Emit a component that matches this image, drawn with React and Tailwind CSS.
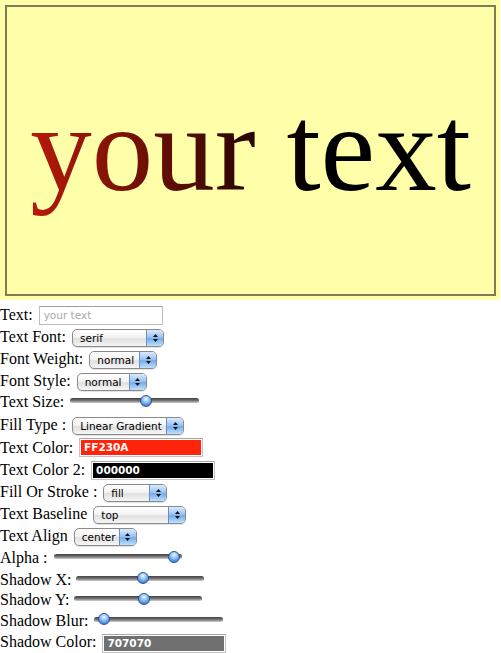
import React from "react";

const sans = "font-['DejaVu_Sans',sans-serif]";

function Arrows() {
  return (
    <span className="flex w-[17px] flex-col items-center justify-center gap-[2px] border-l border-[#6a8fc6] bg-[linear-gradient(#dbeafd,#9cc5f3_45%,#74abeb_55%,#c2e0fd)]">
      <svg width="5" height="3" viewBox="0 0 5 3">
        <polygon points="2.5,0 5,3 0,3" fill="#111" />
      </svg>
      <svg width="5" height="3" viewBox="0 0 5 3">
        <polygon points="0,0 5,0 2.5,3" fill="#111" />
      </svg>
    </span>
  );
}

function Select({ w, children }) {
  return (
    <div
      className={`ml-[2px] mt-[2px] flex h-[18px] ${w} items-stretch overflow-hidden rounded-[5px] border border-[#8a8a8a] bg-[linear-gradient(#ffffff,#f4f4f4_45%,#e0e0e0_55%,#f6f6f6)] shadow-[0_1px_1px_rgba(0,0,0,0.12)]`}
    >
      <span className={`flex-1 pl-[7px] text-[10.5px] leading-[16px] text-black ${sans}`}>{children}</span>
      <Arrows />
    </div>
  );
}

function Slider({ w, thumb, extra }) {
  return (
    <div className={`relative mb-[3px] flex h-[14px] ${w} ${extra} items-center`}>
      <div className="h-[5px] w-full rounded-full bg-[linear-gradient(#3f3f3f,#7a7a7a_55%,#cfcfcf)]" />
      <div
        className={`absolute top-[1px] ${thumb} h-[12px] w-[12px] rounded-full border border-[#2d5597] bg-[radial-gradient(circle_at_50%_30%,#eef6ff_0%,#8fc0f2_40%,#3a7fdc_80%,#2c62b8_100%)]`}
      />
    </div>
  );
}

function ColorInput({ bg, w, text }) {
  return (
    <div
      className={`ml-[2px] flex h-[19px] ${w} items-center border border-[#c2c2c2] border-t-[#a8a8a8] bg-white p-[1px]`}
    >
      <div className={`flex h-full w-full items-center pl-[3px] ${bg}`}>
        <span className={`text-[10.5px] font-bold leading-none text-white ${sans}`}>{text}</span>
      </div>
    </div>
  );
}

function Row({ h, label, children }) {
  return (
    <div className={`flex ${h} items-center`}>
      <span className="whitespace-pre">{label}</span>
      {children}
    </div>
  );
}

export default function App() {
  return (
    <div className="w-[501px] bg-white font-['Liberation_Serif','Times_New_Roman',serif] text-[16px] text-black">
      <div className="h-[300px] w-[500px] bg-[#ffffaa] pl-[5px] pt-[5px]">
        <div className="h-[291px] w-[491px] border-2 border-[#7d7d58]">
          <div className="pt-[80px] text-center text-[123px] leading-[123px]">
            <span className="bg-[linear-gradient(to_right,#b81a0a_0px,#000000_285px)] bg-clip-text text-transparent">
              your text
            </span>
          </div>
        </div>
      </div>

      <div className="pt-[4px]">
        <Row h="h-[22px]" label="Text: ">
          <div className="ml-[2px] flex h-[19px] w-[124px] items-center border border-[#bdbdbd] border-t-[#9e9e9e] bg-white pl-[4px]">
            <span className={`text-[10.5px] leading-none text-[#a9a9a9] ${sans}`}>your text</span>
          </div>
        </Row>
        <Row h="h-[22px]" label="Text Font: ">
          <Select w="w-[92px]">serif</Select>
        </Row>
        <Row h="h-[22px]" label="Font Weight: ">
          <Select w="w-[68px]">normal</Select>
        </Row>
        <Row h="h-[21px]" label="Font Style: ">
          <Select w="w-[70px]">normal</Select>
        </Row>
        <Row h="h-[22px]" label="Text Size: ">
          <Slider w="w-[129px]" extra="ml-[2px]" thumb="left-[70px]" />
        </Row>
        <Row h="h-[23px]" label="Fill Type : ">
          <Select w="w-[112px]">Linear Gradient</Select>
        </Row>
        <Row h="h-[23px]" label="Text Color: ">
          <ColorInput bg="bg-[#ff230a]" w="w-[124px]" text="FF230A" />
        </Row>
        <Row h="h-[22px]" label="Text Color 2: ">
          <ColorInput bg="bg-[#000000]" w="w-[124px]" text="000000" />
        </Row>
        <Row h="h-[22px]" label="Fill Or Stroke : ">
          <Select w="w-[64px]">fill</Select>
        </Row>
        <Row h="h-[22px]" label="Text Baseline ">
          <Select w="w-[93px]">top</Select>
        </Row>
        <Row h="h-[22px]" label="Text Align ">
          <Select w="w-[63px]">center</Select>
        </Row>
        <Row h="h-[22px]" label="Alpha : ">
          <Slider w="w-[128px]" extra="ml-[2px]" thumb="left-[114px]" />
        </Row>
        <Row h="h-[21px]" label="Shadow X:">
          <Slider w="w-[128px]" extra="ml-[4px]" thumb="left-[61px]" />
        </Row>
        <Row h="h-[20px]" label="Shadow Y:">
          <Slider w="w-[128px]" extra="ml-[4px]" thumb="left-[64px]" />
        </Row>
        <Row h="h-[21px]" label="Shadow Blur: ">
          <Slider w="w-[129px]" extra="ml-[2px]" thumb="left-[4px]" />
        </Row>
        <Row h="h-[22px]" label="Shadow Color: ">
          <div className="mt-[2px]">
            <ColorInput bg="bg-[#707070]" w="w-[124px]" text="707070" />
          </div>
        </Row>
      </div>
    </div>
  );
}
